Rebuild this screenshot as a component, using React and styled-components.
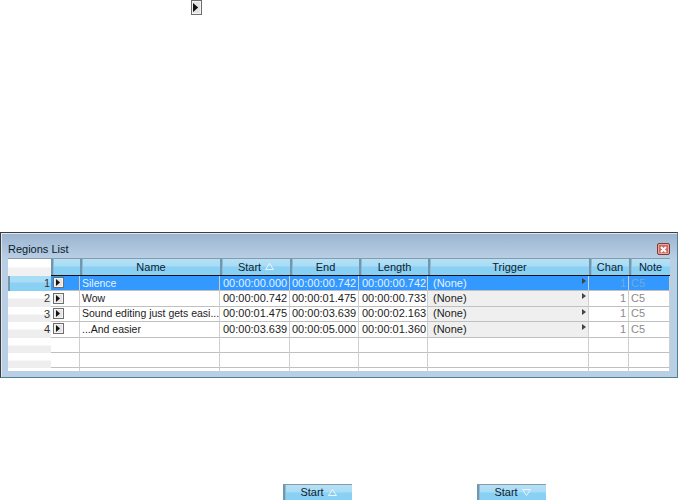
import React from "react";
import styled, { createGlobalStyle } from "styled-components";

const GlobalStyle = createGlobalStyle`
  html, body {
    margin: 0;
    padding: 0;
    background: #fff;
  }
  body {
    width: 678px;
    height: 500px;
    overflow: hidden;
    font-family: "Liberation Sans", Arial, sans-serif;
    font-size: 11px;
    color: #000;
  }
`;

const Page = styled.div`
  width: 678px;
  height: 500px;
  display: flex;
  flex-direction: column;
`;

const TopRow = styled.div`
  height: 15px;
  padding-left: 191px;
  display: flex;
  align-items: flex-end;
`;

const Square = styled.span`
  box-sizing: border-box;
  flex: none;
  width: ${(p) => p.$size}px;
  height: ${(p) => p.$height || p.$size}px;
  border: 1px solid #6d6d6d;
  box-shadow: inset 0 0 0 1px #f4f4f4;
  background: #e4e4e4;
  display: flex;
  align-items: center;
  justify-content: center;
`;

const Window = styled.div`
  box-sizing: border-box;
  margin-top: 217px;
  height: 146px;
  border: 1px solid #4f8093;
  border-top-color: #3c3c3c;
  border-left-color: #3c3c3c;
  box-shadow: inset 1px 1px 0 #dfe8f2;
  background: linear-gradient(#9db4d0, #b8cfe6 26px, #b8cfe6);
  padding: 0 7px 6px 7px;
  display: flex;
  flex-direction: column;
`;

const TitleBar = styled.div`
  height: 25px;
  flex: none;
  display: flex;
  justify-content: space-between;
  align-items: flex-end;
  box-sizing: border-box;
`;

const Title = styled.div`
  font-size: 11px;
  line-height: 14px;
  padding-bottom: 2px;
  color: #0b1a2b;
`;

const CloseButton = styled.div`
  box-sizing: border-box;
  width: 13px;
  height: 12px;
  margin-bottom: 3px;
  border: 1px solid #7d3c36;
  border-radius: 2px;
  box-shadow: inset 0 0 0 1px #e9a79f;
  background: #cf6a62;
  display: flex;
  align-items: center;
  justify-content: center;
`;

const GridBody = styled.div`
  flex: 1;
  min-height: 0;
  background: #fff;
  overflow: hidden;
  display: grid;
  grid-template-columns: 43px 29px 140px 70px 69px 69px 161px 40px 41px;
  grid-auto-rows: min-content;
`;

const HeadCell = styled.div`
  box-sizing: border-box;
  height: 17px;
  padding-bottom: 1px;
  display: flex;
  align-items: center;
  justify-content: center;
  gap: 4px;
  font-size: 11px;
  color: #10202e;
  border-top: 1px solid #8d9aa6;
  border-left: 2px solid #6f98ae;
  box-shadow: inset 1px 0 0 #8fbcd4;
  background: linear-gradient(#b3e1f7 0, #a9dcf5 7px, #88d0f4 8px, #88d0f4 100%);
`;

const CornerCell = styled.div`
  grid-row: span 2;
  height: 18px;
  border-top: 1px solid #8d9aa6;
  box-sizing: border-box;
  background: linear-gradient(#fff, #fff 8px, #f1f1f1 9px);
`;

const Rule = styled.div`
  grid-column: 2 / -1;
  height: 1px;
  background: #111;
`;

const RowHeader = styled.div`
  box-sizing: border-box;
  height: 15.4px;
  padding-right: 1px;
  text-align: right;
  line-height: 14px;
  font-size: 11px;
  color: #333;
  background: ${(p) =>
    p.$selected
      ? "linear-gradient(#a9dcf5 0, #a9dcf5 6px, #8ad0f3 7px)"
      : "linear-gradient(#fff, #fff 7px, #eeeeee 8px)"};
  border-left: ${(p) => (p.$selected ? "2px solid #6f98ae" : "0")};
`;

const Cell = styled.div`
  box-sizing: border-box;
  height: 15.4px;
  display: flex;
  align-items: center;
  justify-content: ${(p) => (p.$right ? "flex-end" : "flex-start")};
  padding: ${(p) => (p.$right ? "0 2px 1px 0" : `0 0 1px ${p.$pad ?? 2}px`)};
  font-size: ${(p) => (p.$name ? "10.5px" : "11px")};
  line-height: 14px;
  white-space: nowrap;
  position: relative;
  border-bottom: 1px solid #c0c0c0;
  border-right: 1px solid #cfcfcf;
  color: ${(p) => (p.$selected ? "#e6f2ff" : p.$muted ? "#8a8a8a" : "#1c1c1c")};
  background: ${(p) =>
    p.$selected ? "#3399ff" : p.$shade ? "#efefef" : "#fff"};
  ${(p) => p.$selected && p.$muted && "color: #74a9d8;"}
`;

const Caret = styled.span`
  position: absolute;
  right: 2px;
  top: 2px;
  width: 0;
  height: 0;
  border-left: 4px solid #444;
  border-top: 3.5px solid transparent;
  border-bottom: 3.5px solid transparent;
`;

const Footer = styled.div`
  margin-top: 106px;
  height: 16px;
  padding-left: 283px;
  display: flex;
  gap: 125px;
`;

const FooterHead = styled(HeadCell)`
  width: 69px;
  height: 16px;
`;

function PlayIcon({ size = 1 }) {
  return (
    <svg width={5 * size} height={7 * size} viewBox="0 0 5 7">
      <path d="M0 0 L4 3.5 L0 7 Z" fill="#111" />
    </svg>
  );
}

function SortArrow({ down }) {
  return (
    <svg width="9" height="7" viewBox="0 0 9 7">
      <path
        d={down ? "M0.5 0.5 H8.5 L4.5 6.5 Z" : "M4.5 0.5 L8.5 6.5 H0.5 Z"}
        fill="none"
        stroke="#e8f6fd"
      />
    </svg>
  );
}

const rows = [
  ["Silence", "00:00:00.000", "00:00:00.742", "00:00:00.742"],
  ["Wow", "00:00:00.742", "00:00:01.475", "00:00:00.733"],
  ["Sound editing just gets easi...", "00:00:01.475", "00:00:03.639", "00:00:02.163"],
  ["...And easier", "00:00:03.639", "00:00:05.000", "00:00:01.360"],
];

const heads = ["Name", "Start", "End", "Length", "Trigger", "Chan", "Note"];

export default function App() {
  return (
    <Page>
      <GlobalStyle />
      <TopRow>
        <Square $size={11} $height={15}>
          <PlayIcon size={1.3} />
        </Square>
      </TopRow>
      <Window>
        <TitleBar>
          <Title>Regions List</Title>
          <CloseButton>
            <svg width="7" height="7" viewBox="0 0 7 7">
              <path d="M1 1 L6 6 M6 1 L1 6" stroke="#fff" strokeWidth="2" />
            </svg>
          </CloseButton>
        </TitleBar>
        <GridBody>
          <CornerCell />
          <HeadCell />
          {heads.map((h) => (
            <HeadCell key={h}>
              {h}
              {h === "Start" && <SortArrow />}
            </HeadCell>
          ))}
          <Rule />
          {rows.map((r, i) => {
            const sel = i === 0;
            return (
              <React.Fragment key={r[0]}>
                <RowHeader $selected={sel}>{i + 1}</RowHeader>
                <Cell $selected={sel} $pad={2}>
                  <Square $size={11}>
                    <PlayIcon />
                  </Square>
                </Cell>
                <Cell $selected={sel} $name>{r[0]}</Cell>
                <Cell $selected={sel} $pad={3}>{r[1]}</Cell>
                <Cell $selected={sel} $pad={2}>{r[2]}</Cell>
                <Cell $selected={sel} $pad={3}>{r[3]}</Cell>
                <Cell $selected={sel} $shade $pad={5}>
                  (None)
                  <Caret />
                </Cell>
                <Cell $selected={sel} $muted $right>1</Cell>
                <Cell $selected={sel} $muted>C5</Cell>
              </React.Fragment>
            );
          })}
          {[0, 1, 2].map((i) => (
            <React.Fragment key={i}>
              <RowHeader />
              {heads.concat("x").map((h) => (
                <Cell key={h} />
              ))}
            </React.Fragment>
          ))}
        </GridBody>
      </Window>
      <Footer>
        <FooterHead>
          Start
          <SortArrow />
        </FooterHead>
        <FooterHead>
          Start
          <SortArrow down />
        </FooterHead>
      </Footer>
    </Page>
  );
}
